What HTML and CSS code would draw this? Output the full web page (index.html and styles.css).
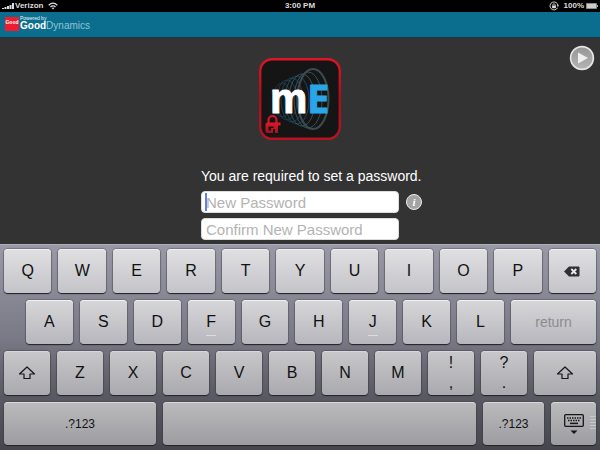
FILE: index.html
```html
<!DOCTYPE html>
<html lang="en">
<head>
<meta charset="utf-8">
<meta name="viewport" content="width=device-width, initial-scale=1">
<title>Set password</title>
<link rel="stylesheet" href="styles.css">
</head>
<body>
<header class="status">
  <div class="status-left">
    <svg width="12" height="7" viewBox="0 0 12 7" fill="#ddd" aria-hidden="true"><path d="M0 5h2v1H0zM2.5 4h2v2h-2zM5 3h2v3H5zM7.500 2h2v4h-2zM10 0h2v6h-2z"/></svg>
    <span>Verizon</span>
    <svg class="wifi" width="10" height="8" viewBox="0 0 10 8" fill="none" stroke="#ddd" stroke-width="1.3" aria-hidden="true"><path d="M.7 3.2Q5-.9 9.3 3.2M2.5 5Q5 2.7 7.5 5"/><path d="M3.7 6.1L5 7.500l1.3-1.400Q5 5 3.700 6.100z" fill="#ddd" stroke="none"/></svg>
  </div>
  <time>3:00 PM</time>
  <div class="status-right">
    <svg width="10" height="10" viewBox="0 0 10 10" aria-hidden="true"><path d="M8.6 6.7A4 4 0 1 1 9 4.7" fill="none" stroke="#ccc"/><path d="M7.6 4.2h2.4L8.8 6z" fill="#ccc"/><path d="M3.9 5V3.8a1.1 1.1 0 0 1 2.2 0V5" fill="none" stroke="#ccc" stroke-width=".8"/><path d="M3.1 4.6h3.8v2.6H3.1z" fill="#ddd"/></svg>
    <span class="charge">100%</span>
    <svg width="12" height="6" viewBox="0 0 12 6" aria-hidden="true"><path d="M.5.5h10v5H.5z" fill="#ccc" stroke="#888"/><path d="M11 2h1v2h-1z" fill="#aaa"/></svg>
  </div>
</header>
<div class="brand">
  <span class="brand-mark">Good</span>
  <div class="brand-name">
    <span class="powered">Powered by</span>
    <span class="dynamics"><b>Good</b>Dynamics</span>
  </div>
</div>
<main class="content">
  <button class="play" type="button" aria-label="Continue">
    <svg width="26" height="26" viewBox="0 0 26 26"><defs><linearGradient id="pg" x2="0" y2="1"><stop stop-color="#969696"/><stop offset="1" stop-color="#b4b4b4"/></linearGradient></defs><circle cx="13" cy="13" r="11.400" fill="url(#pg)" stroke="#e6e6e6" stroke-width="1.600"/><path d="M9 7.400L19 13 9 18.600z" fill="#efefef"/></svg>
  </button>
  <svg class="app-icon" width="84" height="84" viewBox="0 0 84 84" role="img" aria-label="mE">
    <defs>
      <linearGradient id="edge" x2="0" y2="1"><stop stop-color="#e01424"/><stop offset=".5" stop-color="#a90f1a"/><stop offset="1" stop-color="#b51420"/></linearGradient>
      <linearGradient id="lock" x2="0" y2="1"><stop stop-color="#e31626"/><stop offset="1" stop-color="#a01420"/></linearGradient>
    </defs>
    <rect x="2.200" y="2.200" width="79.600" height="79.600" rx="12" fill="#151515" stroke="url(#edge)" stroke-width="2.400"/>
    <g fill="none" stroke="#236480" stroke-width=".8">
      <ellipse cx="24" cy="43" rx="9" ry="17" opacity=".5"/>
      <ellipse cx="29" cy="43" rx="10" ry="20" opacity=".6"/>
      <ellipse cx="34" cy="43" rx="11" ry="22" opacity=".7"/>
      <ellipse cx="39" cy="43" rx="12" ry="24" opacity=".8"/>
      <ellipse cx="44" cy="43" rx="13" ry="26" stroke="#356272"/>
      <ellipse cx="50" cy="43" rx="14" ry="28" stroke="#36545f" stroke-width="1"/>
      <ellipse cx="55" cy="42" rx="15.500" ry="30" stroke="#3c4c51" stroke-width="2"/>
    </g>
    <text class="letter-m" x="12" y="56">m</text>
    <text class="letter-e" x="49" y="56">E</text>
    <path d="M10.500 66v-3a4 4 0 0 1 8 0v3" fill="none" stroke="#d91423" stroke-width="2.200"/>
    <path d="M9.500 65.500h13v3H20V76h-3v-4h-2v4H9.500q-2 0-2-2v-6.500q0-2 2-2z" fill="url(#lock)"/>
    <path d="M10.500 69.500h5V71h-2.500v2.500h-2.500z" fill="#151515"/>
  </svg>
  <form class="form">
    <p class="message">You are required to set a password.</p>
    <div class="fields">
      <div class="field-row">
        <input class="field active" type="password" placeholder="New Password" aria-label="New Password">
        <button class="info" type="button" aria-label="Password rules">i</button>
      </div>
      <div class="field-row">
        <input class="field" type="password" placeholder="Confirm New Password" aria-label="Confirm New Password">
      </div>
    </div>
  </form>
</main>
<section class="keyboard" aria-label="Keyboard">
  <div class="keys">
    <button class="key">Q</button><button class="key">W</button><button class="key">E</button><button class="key">R</button><button class="key">T</button><button class="key">Y</button><button class="key">U</button><button class="key">I</button><button class="key">O</button><button class="key">P</button>
    <button class="key" aria-label="Delete"><svg width="16" height="11" viewBox="0 0 16 11"><path d="M0 5.500L5 .5h9.500q1 0 1 1v8q0 1-1 1H5z" fill="#303033"/><path d="M7.300 3l5 5M12.300 3l-5 5" stroke="#e8e8ea" stroke-width="1.900"/></svg></button>
  </div>
  <div class="keys home">
    <button class="key">A</button><button class="key">S</button><button class="key">D</button><button class="key ridge">F</button><button class="key">G</button><button class="key">H</button><button class="key ridge">J</button><button class="key">K</button><button class="key">L</button>
    <button class="key return">return</button>
  </div>
  <div class="keys lower">
    <button class="key" aria-label="Shift"><svg width="18" height="14" viewBox="0 0 18 14" fill="none" stroke="#161616" stroke-width="1.200" stroke-linejoin="round"><path d="M9 1l7.500 7H12v4.500H6V8H1.500z"/></svg></button>
    <button class="key">Z</button><button class="key">X</button><button class="key">C</button><button class="key">V</button><button class="key">B</button><button class="key">N</button><button class="key">M</button>
    <button class="key pair"><span>!</span><span>,</span></button>
    <button class="key pair"><span>?</span><span>.</span></button>
    <button class="key shift-right" aria-label="Shift"><svg width="18" height="14" viewBox="0 0 18 14" fill="none" stroke="#161616" stroke-width="1.200" stroke-linejoin="round"><path d="M9 1l7.500 7H12v4.500H6V8H1.500z"/></svg></button>
  </div>
  <div class="keys bottom">
    <button class="key mode mode-left">.?123</button>
    <button class="key space" aria-label="Space"></button>
    <button class="key mode mode-right">.?123</button>
    <button class="key hide" aria-label="Hide keyboard"><svg width="20" height="22" viewBox="0 0 20 22"><rect x=".7" y="1.700" width="18.600" height="11.600" rx="1" fill="none" stroke="#161616" stroke-width="1.300"/><path d="M3 5h14M4 7.500h12" stroke="#161616" stroke-width="1.500" stroke-dasharray="1.500 1"/><path d="M6 10.400h8" stroke="#161616" stroke-width="1.500"/><path d="M6.500 17.500h7L10 21z" fill="#161616"/></svg></button>
  </div>
</section>
</body>
</html>
```
FILE: styles.css
```css
* { box-sizing: border-box; }

body {
  margin: 0;
  min-height: 100vh;
  display: flex;
  flex-direction: column;
  background: #333;
  color: #fff;
  font-family: "Liberation Sans", Arial, sans-serif;
}

button { margin: 0; padding: 0; border: 0; font: inherit; color: inherit; }
svg { display: block; }

.status {
  display: grid;
  grid-template-columns: 1fr auto 1fr;
  align-items: center;
  height: 12px;
  padding: 0 2px;
  background: #000;
  color: #ddd;
  font-size: 8px;
  font-weight: bold;
  line-height: 12px;
}

.status time { font-size: 8px; }
.status-left, .status-right { display: flex; align-items: center; gap: 1px; }
.status-left .wifi { margin-left: 4px; }
.status-right { justify-content: flex-end; gap: 2px; }
.charge { margin-left: 3px; }

.brand {
  display: flex;
  align-items: center;
  gap: 1px;
  height: 26px;
  padding: 0 5px 2px;
  background: #0c6e8e;
  border-bottom: 1px solid #183943;
}

.brand-mark {
  width: 14px;
  height: 14px;
  background: #ef1c2e;
  font-size: 5px;
  font-weight: bold;
  line-height: 10px;
  text-align: center;
}

.brand-name { display: flex; flex-direction: column; color: #e8f6fa; }
.powered { font-size: 5px; line-height: 5px; }
.dynamics { font-size: 10px; line-height: 10px; color: #8fc4d5; }
.dynamics b { color: #fff; }

.content {
  position: relative;
  flex: 1;
  display: flex;
  flex-direction: column;
  align-items: center;
  padding: 19px 0 4px;
}

.play {
  position: absolute;
  top: 7px;
  right: 5px;
  background: none;
}

.app-icon { flex: none; }
.letter-m, .letter-e { font-weight: bold; stroke-linejoin: round; }
.letter-m {
  font-family: "Liberation Sans", Arial, sans-serif;
  font-size: 42px;
  fill: #fff;
  stroke: #fff;
  stroke-width: 1px;
}
.letter-e {
  font-family: "Open Sans", sans-serif;
  font-size: 40px;
  fill: #29a5e8;
  stroke: #29a5e8;
  stroke-width: 1px;
}

.form { width: 198px; margin-top: 26px; }
.message { margin: 0 0 6px; font-size: 14px; line-height: 18px; white-space: nowrap; }
.fields { display: grid; gap: 5px; }
.field-row { position: relative; }

.field {
  display: block;
  width: 100%;
  height: 22px;
  padding: 0 4px;
  border: 1px solid #ddd;
  border-radius: 4px;
  background: #fff;
  color: #222;
  font: 15px/20px "Liberation Sans", Arial, sans-serif;
}

.field::placeholder { color: #b3b3b3; opacity: 1; }
.field.active { background: linear-gradient(#5b82ee, #5b82ee) 3px 1px / 2px 18px no-repeat #fff; }

.info {
  position: absolute;
  top: 3px;
  left: calc(100% + 7px);
  width: 16px;
  height: 16px;
  border: 1px solid #eee;
  border-radius: 50%;
  background: #a3a3a3;
  color: #fff;
  font: italic bold 11px/14px "Liberation Serif", serif;
}

.keyboard {
  flex: none;
  display: grid;
  gap: 7px;
  padding: 4px 4px 5px;
  border-top: 1px solid #b0afb9;
  background: linear-gradient(#9a99a6, #7a7986 45%, #5b5b64 72%, #46464e);
}

.keys { display: flex; gap: 7px; height: 44px; }
.home { padding-left: 22px; }
.bottom { height: 43px; }

.key {
  position: relative;
  flex: 1 1 0;
  min-width: 0;
  border-radius: 4px;
  background: linear-gradient(#e0e0e2, #c4c3c9);
  box-shadow: inset 0 1px #f0f0f1, 0 1px 1px #222228, 0 0 1px 1px #55555f80;
  color: #111;
  font-size: 16px;
  line-height: 20px;
  text-align: center;
}

.key svg { margin: 0 auto; }
.home .key { background: linear-gradient(#d7d7d9, #b7b6bd); }
.lower .key { background: linear-gradient(#c8c8ca, #aaa9af); }
.bottom .key { background: linear-gradient(#bbbbbd, #9d9ca1); }
.lower .key, .bottom .key { box-shadow: inset 0 1px #d8d8da, 0 1px 1px #222228, 0 0 1px 1px #44444c80; }

.ridge::after {
  content: "";
  position: absolute;
  bottom: 8px;
  left: calc(50% - 5px);
  width: 10px;
  height: 1px;
  background: #dcdce0;
}

.home .return { flex: 0 0 85px; color: #8c8c90; font-size: 14px; }
.pair span { display: block; }
.shift-right { flex: 0 0 62px; }
.bottom .mode { font-size: 12px; }
.mode-left { flex: 0 0 152px; }
.mode-right { flex: 0 0 61px; }
.hide { flex: 0 0 45px; }
.hide::after {
  content: "";
  position: absolute;
  right: 0;
  top: 14px;
  width: 6px;
  height: 15px;
  background: repeating-linear-gradient(#c9c9cc 0 1px, transparent 1px 3px);
}
```
